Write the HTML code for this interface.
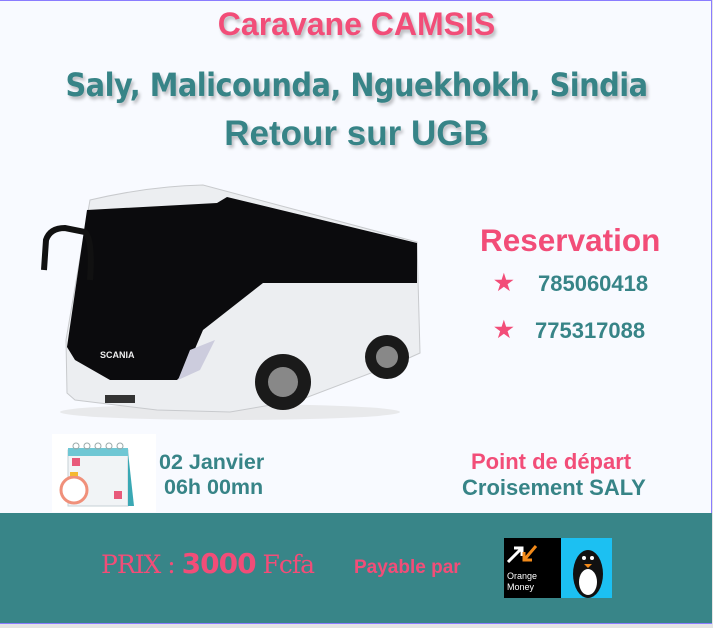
<!DOCTYPE html>
<html><head><meta charset="utf-8"><style>
html,body{margin:0;padding:0}
body{width:713px;height:628px;background:#e4e4e4;position:relative;overflow:hidden;font-family:"Liberation Sans",sans-serif}
#card{position:absolute;left:0;top:0;width:711px;height:622px;background:#f8faff;border-top:1px solid #8a7cff;border-right:1px solid #8a7cff;border-bottom:1px solid #8a7cff}
.t{position:absolute;white-space:nowrap;font-weight:bold}
.pk{color:#f24d78}.tl{color:#378487}
.sh{text-shadow:2px 3px 3px rgba(0,0,0,.25)}
#band{position:absolute;left:0;top:513px;width:712px;height:110px;background:#388588}
</style></head><body>
<div id="card"></div>
<div class="t pk sh" style="left:0;width:713px;text-align:center;top:6px;font-size:32px">Caravane CAMSIS</div>
<div class="t tl sh" style="left:0;width:713px;text-align:center;top:66px;font-size:32px;font-family:'DejaVu Sans Condensed','DejaVu Sans',sans-serif;font-weight:bold;letter-spacing:-0.5px">Saly, Malicounda, Nguekhokh, Sindia</div>
<div class="t tl sh" style="left:0;width:713px;text-align:center;top:114px;font-size:35px">Retour sur UGB</div>

<svg style="position:absolute;left:0;top:0" width="713" height="628">
<ellipse cx="230" cy="412" rx="170" ry="8" fill="#ddd" opacity=".6"/>
<path d="M90,200 Q150,186 203,185 L417,242 L420,353 L400,362 L300,400 L230,412 L157,410 L75,400 L67,393 L66,340 Z" fill="#eceef1" stroke="#c8cacd"/>
<path d="M87,210 L217,203 L227,197 L417,243 L417,283 L263,283 L203,330 L185,372 L177,380 L110,380 L75,360 L67,347 Z" fill="#0b0b0d"/>
<path d="M178,380 L190,350 L215,340 L200,370 Z" fill="#ccd"/>
<circle cx="283" cy="382" r="28" fill="#1a1a1a"/><circle cx="283" cy="382" r="15" fill="#888"/>
<circle cx="387" cy="357" r="22" fill="#1a1a1a"/><circle cx="387" cy="357" r="11" fill="#888"/>
<path d="M44,270 L46,240 Q50,228 65,228 L85,232 Q93,240 90,280" fill="none" stroke="#111" stroke-width="6"/>
<text x="100" y="358" fill="#eee" font-family="Liberation Sans" font-weight="bold" font-size="9">SCANIA</text>
<rect x="105" y="395" width="30" height="8" fill="#333"/>
</svg>

<div class="t pk" style="left:480px;top:222px;font-size:31.5px">Reservation</div>
<div class="t pk" style="left:494px;top:270px;font-size:22px">★</div>
<div class="t tl" style="left:538px;top:271px;font-size:22px">785060418</div>
<div class="t pk" style="left:494px;top:317px;font-size:22px">★</div>
<div class="t tl" style="left:535px;top:318px;font-size:22px">775317088</div>

<svg style="position:absolute;left:52px;top:434px" width="104" height="78">
<rect width="104" height="78" fill="#fff"/>
<rect x="16" y="16" width="60" height="56" fill="#f1f4f6" stroke="#c6d0d6"/>
<rect x="16" y="14" width="60" height="8" fill="#6fc7d4"/>
<path d="M76,18 L82,72 L76,72 Z" fill="#3aa8b4"/>
<g fill="none" stroke="#9aa"><circle cx="24" cy="12" r="3"/><circle cx="35" cy="12" r="3"/><circle cx="46" cy="12" r="3"/><circle cx="57" cy="12" r="3"/><circle cx="68" cy="12" r="3"/></g>
<rect x="20" y="24" width="8" height="8" fill="#e85a7a"/><rect x="62" y="57" width="8" height="8" fill="#e85a7a"/>
<circle cx="22" cy="56" r="13" fill="#fff" stroke="#f0907a" stroke-width="3"/><rect x="18" y="38" width="8" height="4" fill="#f5b830"/>
</svg>
<div class="t tl" style="left:159px;top:450px;font-size:21.5px">02 Janvier</div>
<div class="t tl" style="left:164px;top:475px;font-size:21.5px">06h 00mn</div>
<div class="t pk" style="left:471px;top:449px;font-size:22px">Point de départ</div>
<div class="t tl" style="left:462px;top:475px;font-size:22px">Croisement SALY</div>

<div id="band"></div>
<div class="t pk" style="left:101px;top:547px;font-size:25px;font-weight:normal;font-family:'DejaVu Serif','Liberation Serif',serif;letter-spacing:-1px">PRIX : <b style="font-family:'DejaVu Sans',sans-serif;font-size:28px">3000</b> Fcfa</div>
<div class="t pk" style="left:354px;top:557px;font-size:19px">Payable par</div>
<svg style="position:absolute;left:504px;top:538px" width="108" height="60">
<rect width="58" height="60" fill="#000"/><rect x="57" width="51" height="60" fill="#1cc0f2"/>
<path d="M4,24 L18,10 M10,10 L18,10 L18,18" stroke="#fff" stroke-width="3" fill="none"/>
<path d="M32,8 L20,22 M20,14 L20,22 L28,22" stroke="#f28a1a" stroke-width="3" fill="none"/>
<text x="3" y="41" fill="#fff" font-size="9" font-family="Liberation Sans">Orange</text>
<text x="3" y="52" fill="#fff" font-size="9" font-family="Liberation Sans">Money</text>
<ellipse cx="84" cy="36" rx="15" ry="24" fill="#111"/><ellipse cx="84" cy="44" rx="9" ry="13" fill="#fff"/>
<circle cx="80" cy="20" r="2" fill="#fff"/><circle cx="88" cy="20" r="2" fill="#fff"/><path d="M80,26 L88,26 L84,30Z" fill="#f28a1a"/>
</svg>
</body></html>
